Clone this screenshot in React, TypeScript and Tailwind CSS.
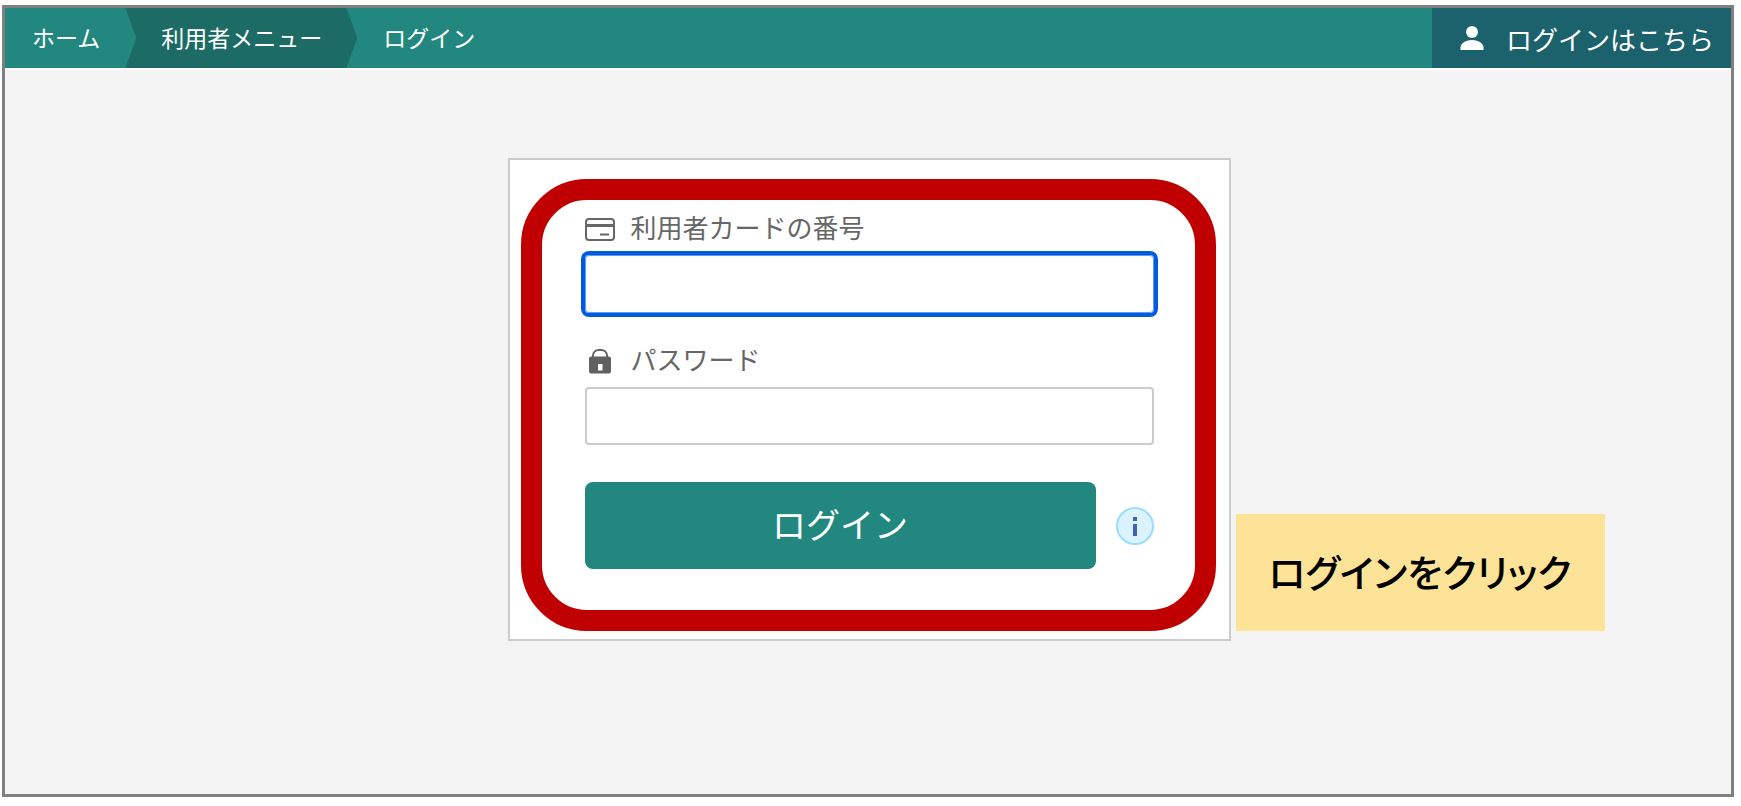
import type { ReactNode } from "react";

type FieldProps = {
  id: string;
  label: string;
  type: string;
  icon: ReactNode;
  active?: boolean;
};

function UserIcon() {
  return (
    <svg viewBox="0 0 24 24" className="size-6 fill-white" aria-hidden="true">
      <circle cx="12" cy="6" r="6" />
      <path d="M0.5 24v-2.500C0.5 17 6.500 14 12 14s11.500 3 11.500 7.500V24z" />
    </svg>
  );
}

function CardIcon() {
  return (
    <svg viewBox="0 0 30 24" className="h-6 w-[30px]" fill="none" stroke="#666" strokeWidth="2" aria-hidden="true">
      <rect x="1" y="2" width="28" height="21" rx="3" />
      <path d="M1 8.500h28" strokeWidth="3" />
      <path d="M15 17.500h9" />
    </svg>
  );
}

function LockIcon() {
  return (
    <svg viewBox="0 0 30 26" className="h-[26px] w-[30px]" aria-hidden="true">
      <path d="M8 10V7.500a5.500 5.500 0 0 1 5.500-5.500h3a5.500 5.500 0 0 1 5.500 5.500V10" fill="none" stroke="#666" strokeWidth="2" />
      <path
        fill="#606060"
        fillRule="evenodd"
        d="M6 8.500h18a2 2 0 0 1 2 2v13a2 2 0 0 1-2 2H6a2 2 0 0 1-2-2v-13a2 2 0 0 1 2-2zM13 16v6.500h4.500V16z"
      />
    </svg>
  );
}

function InfoIcon() {
  return (
    <svg viewBox="0 0 38 38" className="size-[38px]" aria-hidden="true">
      <circle cx="19" cy="19" r="18" fill="#dbf2ff" stroke="#9adcff" strokeWidth="2" />
      <path d="M17 10h4v4h-4zM17 17h4v12h-4z" fill="#4560ae" />
    </svg>
  );
}

function Field({ id, label, type, icon, active }: FieldProps) {
  return (
    <div className="flex flex-col gap-1.5">
      <label htmlFor={id} className="flex h-10 items-center gap-4 text-[26px] leading-9 text-[#666]">
        {icon}
        <span className="pb-1">{label}</span>
      </label>
      <input
        id={id}
        name={id}
        type={type}
        className={
          active
            ? "h-[58px] w-full rounded-sm border border-[#5c9bf0] bg-white px-3 text-[26px] outline-4 outline-[#005be0]"
            : "h-[58px] w-full rounded-sm border-2 border-[#ccc] bg-white px-3 text-[26px]"
        }
      />
    </div>
  );
}

export default function App() {
  return (
    <div className="flex min-h-screen flex-col bg-white pt-[5px] pr-[7px] pb-[9px] pl-0.5 font-['Noto_Sans_CJK_JP',sans-serif]">
      <div className="flex grow flex-col border-3 border-[#7f7f7f] bg-[#f4f4f4]">
        <header className="flex h-[62px] border-b-2 border-white bg-[#22877f] text-white">
          <nav className="flex grow text-[23px] leading-[58px]">
            <a href="#home" className="pr-[25px] pl-[27px]">
              ホーム
            </a>
            <a
              href="#menu"
              className="bg-[#1c6b65] pr-[35px] pl-9 [clip-path:polygon(0_0,calc(100%-11px)_0,100%_50%,calc(100%-11px)_100%,0_100%,11px_50%)]"
            >
              利用者メニュー
            </a>
            <a href="#login" className="pl-[26px]">
              ログイン
            </a>
          </nav>
          <a href="#login" className="flex items-center gap-[22px] bg-[#1b626c] pr-[17px] pl-7 text-[26px]">
            <UserIcon />
            ログインはこちら
          </a>
        </header>

        <main className="flex justify-center py-[88px] pl-0.5">
          <div className="relative w-[723px] border-2 border-[#ccc] bg-white px-[75px] pt-[49px] pb-[70px]">
            <form>
              <div className="flex flex-col gap-7">
                <Field id="card" label="利用者カードの番号" type="text" icon={<CardIcon />} active />
                <Field id="password" label="パスワード" type="password" icon={<LockIcon />} />
              </div>
              <div className="mt-[37px] flex items-center gap-5">
                <button type="button" className="h-[87px] grow rounded-lg bg-[#22877f] pb-1 text-[34px] text-white">
                  ログイン
                </button>
                <button type="button" aria-label="ヘルプ">
                  <InfoIcon />
                </button>
              </div>
            </form>

            {/* tutorial highlight and callout on top of the form */}
            <div className="pointer-events-none absolute top-[19px] right-[13px] bottom-2 left-[11px] rounded-[66px] border-[21px] border-[#c00000]" />
            <p className="absolute bottom-2 left-full ml-[7px] flex h-[117px] w-[369px] items-center justify-center bg-[#fde398] pb-1 text-[38px] font-medium whitespace-nowrap text-black [font-feature-settings:'palt']">
              ログインをクリック
            </p>
          </div>
        </main>
      </div>
    </div>
  );
}
